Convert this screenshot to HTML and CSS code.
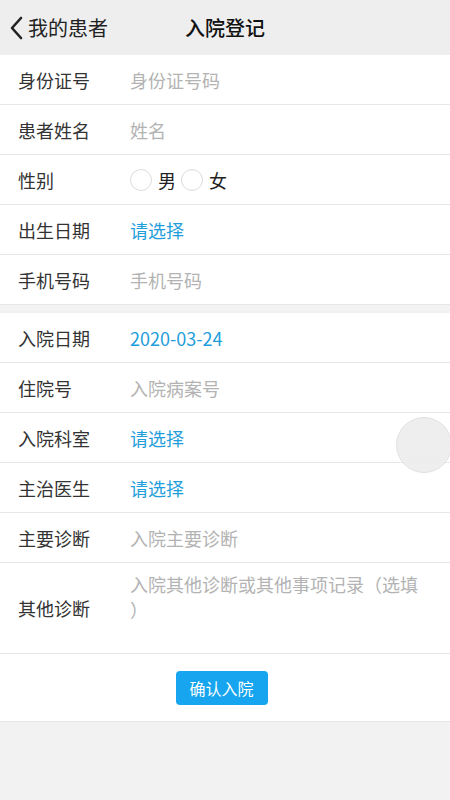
FILE: index.html
```html
<!DOCTYPE html>
<html lang="zh-CN">
<head>
<meta charset="utf-8">
<title>入院登记</title>
<link rel="stylesheet" href="styles.css">
</head>
<body>
<div class="page">
  <header class="topbar">
    <div class="back">
      <svg class="chev" width="14" height="24" viewBox="0 0 14 24"><path d="M12 2 L3 12 L12 22" fill="none" stroke="#222" stroke-width="2.6" stroke-linecap="round" stroke-linejoin="round"/></svg>
      <span>我的患者</span>
    </div>
    <div class="title">入院登记</div>
    <div></div>
  </header>

  <section class="group">
    <div class="row"><span class="label">身份证号</span><input class="field" placeholder="身份证号码"></div>
    <div class="row"><span class="label">患者姓名</span><input class="field" placeholder="姓名"></div>
    <div class="row"><span class="label">性别</span>
      <div class="radios">
        <span class="radio"></span><span class="rtext">男</span>
        <span class="radio r2"></span><span class="rtext">女</span>
      </div>
    </div>
    <div class="row"><span class="label">出生日期</span><span class="pick">请选择</span></div>
    <div class="row"><span class="label">手机号码</span><input class="field" placeholder="手机号码"></div>
  </section>

  <section class="group group2">
    <div class="row"><span class="label">入院日期</span><span class="pick">2020-03-24</span></div>
    <div class="row"><span class="label">住院号</span><input class="field" placeholder="入院病案号"></div>
    <div class="row"><span class="label">入院科室</span><span class="pick">请选择</span></div>
    <div class="row"><span class="label">主治医生</span><span class="pick">请选择</span></div>
    <div class="row"><span class="label">主要诊断</span><input class="field" placeholder="入院主要诊断"></div>
    <div class="row tall"><span class="label">其他诊断</span><div class="area">入院其他诊断或其他事项记录（选填）</div></div>
    <div class="actions"><button class="btn">确认入院</button></div>
  </section>

  <div class="assist"></div>
</div>
</body>
</html>
```

FILE: styles.css
```css
* { box-sizing: border-box; }
html, body { margin: 0; padding: 0; }
body {
  font-family: "Noto Sans CJK SC", "Noto Sans", sans-serif;
  background: #f2f2f2;
  color: #333;
}
.page {
  position: relative;
  width: 450px;
  min-height: 800px;
  background: #f2f2f2;
}
.topbar {
  height: 55px;
  background: #eeeeee;
  display: grid;
  grid-template-columns: 1fr auto 1fr;
  align-items: center;
}
.back {
  display: flex;
  align-items: center;
  padding-left: 9px;
  gap: 5px;
  font-size: 20px;
  color: #222;
}
.chev { display: block; margin-top: 1px; }
.title {
  font-size: 20px;
  font-weight: 500;
  color: #111;
}
.group {
  background: #fff;
}
.group2 {
  margin-top: 8px;
}
.row {
  height: 50px;
  border-bottom: 1px solid #e6e6e6;
  display: flex;
  align-items: center;
  padding: 0 15px 0 18px;
}
.label {
  width: 112px;
  flex: none;
  font-size: 18px;
  color: #333;
}
.field {
  flex: 1;
  border: none;
  outline: none;
  padding: 0;
  font-family: inherit;
  font-size: 18px;
  color: #333;
  background: transparent;
}
.field::placeholder { color: #b3b3b3; }
.pick {
  font-size: 18px;
  color: #1f9edb;
}
.radios {
  display: flex;
  align-items: center;
  font-size: 18px;
  color: #222;
}
.radio {
  width: 22px;
  height: 22px;
  border-radius: 50%;
  border: 1px solid #dcdcdc;
  margin-right: 6px;
}
.r2 { margin-left: 5px; }
.row.tall {
  height: 91px;
}
.area {
  flex: none;
  width: 292px;
  height: 73px;
  font-size: 18px;
  line-height: 25px;
  color: #b3b3b3;
  line-break: anywhere;
  word-break: break-all;
  text-spacing-trim: space-all;
  overflow: hidden;
}
.actions {
  height: 68px;
  border-bottom: 1px solid #e6e6e6;
  display: flex;
  align-items: center;
  justify-content: center;
}
.btn {
  width: 92px;
  height: 34px;
  border: none;
  border-radius: 4px;
  background: #16a5ee;
  color: #fff;
  font-family: inherit;
  font-size: 16px;
  padding: 0;
  margin-left: -7px;
}
.assist {
  position: absolute;
  left: 396px;
  top: 417px;
  width: 56px;
  height: 56px;
  border-radius: 50%;
  background: rgba(236,236,236,0.9);
  border: 1px solid #e2e2e2;
}
```
